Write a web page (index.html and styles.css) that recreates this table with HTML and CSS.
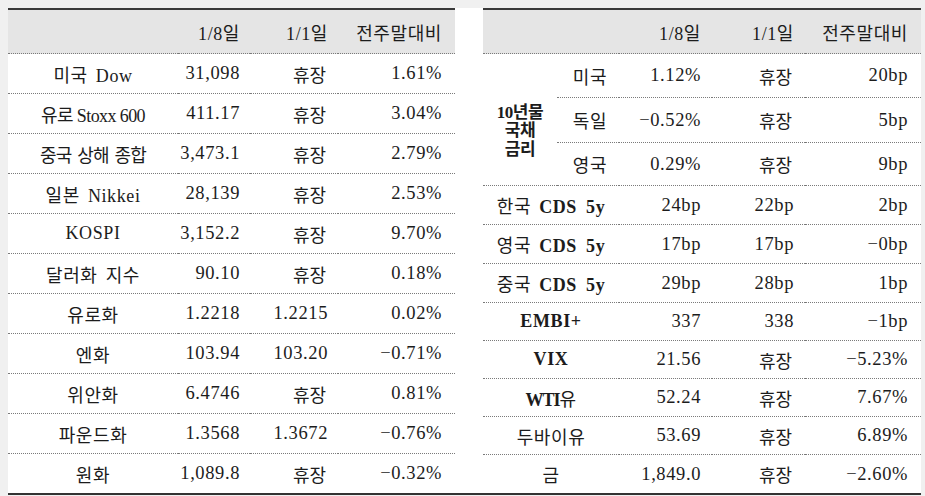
FILE: index.html
```html
<!DOCTYPE html>
<html lang="ko">
<head>
<meta charset="utf-8">
<title>주요 지표</title>
<link rel="stylesheet" href="styles.css">
</head>
<body>
<div class="sheet">
  <div class="tbl tbl-left">
    <div class="c head"></div>
    <div class="c head num">1/8일</div>
    <div class="c head num">1/1일</div>
    <div class="c head num last">전주말대비</div>

    <div class="c lbl"><span>미국 Dow</span></div><div class="c num">31,098</div><div class="c num hj">휴장</div><div class="c num last">1.61%</div>
    <div class="c lbl"><span class="narrow">유로 Stoxx 600</span></div><div class="c num">411.17</div><div class="c num hj">휴장</div><div class="c num last">3.04%</div>
    <div class="c lbl"><span class="tight">중국 상해 종합</span></div><div class="c num">3,473.1</div><div class="c num hj">휴장</div><div class="c num last">2.79%</div>
    <div class="c lbl"><span>일본 Nikkei</span></div><div class="c num">28,139</div><div class="c num hj">휴장</div><div class="c num last">2.53%</div>
    <div class="c lbl"><span>KOSPI</span></div><div class="c num">3,152.2</div><div class="c num hj">휴장</div><div class="c num last">9.70%</div>
    <div class="c lbl"><span>달러화 지수</span></div><div class="c num">90.10</div><div class="c num hj">휴장</div><div class="c num last">0.18%</div>
    <div class="c lbl"><span>유로화</span></div><div class="c num">1.2218</div><div class="c num">1.2215</div><div class="c num last">0.02%</div>
    <div class="c lbl"><span>엔화</span></div><div class="c num">103.94</div><div class="c num">103.20</div><div class="c num last">−0.71%</div>
    <div class="c lbl"><span>위안화</span></div><div class="c num">6.4746</div><div class="c num hj">휴장</div><div class="c num last">0.81%</div>
    <div class="c lbl"><span>파운드화</span></div><div class="c num">1.3568</div><div class="c num">1.3672</div><div class="c num last">−0.76%</div>
    <div class="c lbl end"><span>원화</span></div><div class="c num end">1,089.8</div><div class="c num hj end">휴장</div><div class="c num last end">−0.32%</div>
  </div>

  <div class="tbl tbl-right">
    <div class="c head span2"></div>
    <div class="c head num">1/8일</div>
    <div class="c head num">1/1일</div>
    <div class="c head num last">전주말대비</div>

    <div class="c group"><b>10년물<br>국채<br>금리</b></div>
    <div class="c sub">미국</div><div class="c num">1.12%</div><div class="c num hj">휴장</div><div class="c num last">20bp</div>
    <div class="c sub">독일</div><div class="c num">−0.52%</div><div class="c num hj">휴장</div><div class="c num last">5bp</div>
    <div class="c sub">영국</div><div class="c num">0.29%</div><div class="c num hj">휴장</div><div class="c num last">9bp</div>

    <div class="c lbl span2"><span>한국 <b>CDS 5y</b></span></div><div class="c num">24bp</div><div class="c num">22bp</div><div class="c num last">2bp</div>
    <div class="c lbl span2"><span>영국 <b>CDS 5y</b></span></div><div class="c num">17bp</div><div class="c num">17bp</div><div class="c num last">−0bp</div>
    <div class="c lbl span2"><span>중국 <b>CDS 5y</b></span></div><div class="c num">29bp</div><div class="c num">28bp</div><div class="c num last">1bp</div>
    <div class="c lbl span2"><span><b>EMBI+</b></span></div><div class="c num">337</div><div class="c num">338</div><div class="c num last">−1bp</div>
    <div class="c lbl span2"><span><b>VIX</b></span></div><div class="c num">21.56</div><div class="c num hj">휴장</div><div class="c num last">−5.23%</div>
    <div class="c lbl span2"><span><b class="cond">WTI</b>유</span></div><div class="c num">52.24</div><div class="c num hj">휴장</div><div class="c num last">7.67%</div>
    <div class="c lbl span2"><span>두바이유</span></div><div class="c num">53.69</div><div class="c num hj">휴장</div><div class="c num last">6.89%</div>
    <div class="c lbl span2 end"><span>금</span></div><div class="c num end">1,849.0</div><div class="c num hj end">휴장</div><div class="c num last end">−2.60%</div>
  </div>
</div>
</body>
</html>
```
FILE: styles.css
```css
html, body {
  margin: 0;
  padding: 0;
  background: #f0f0f0;
}

body {
  padding: 8px 0 0 8px;
  font-family: "Liberation Serif", "Noto Sans CJK KR", serif;
  font-size: 18px;
  color: #1c1c1c;
}

.sheet {
  width: 913px;
  display: flex;
  gap: 28px;
  background: #ffffff;
  border-bottom: 2px solid #333333;
}

.tbl {
  display: grid;
}

.tbl-left {
  width: 447px;
  grid-template-columns: 170px 72px 88px 117px;
  grid-template-rows: 46px repeat(10, 40px) 39px;
}

.tbl-right {
  width: 438px;
  grid-template-columns: 74px 62px 93px 93px 116px;
  grid-template-rows: 46px 44px 45px 43px 39px 39px 39px 38px 38px 38px 38px 38px;
}

.c {
  display: flex;
  align-items: center;
  border-bottom: 1px dotted #7a7a7a;
  white-space: nowrap;
  letter-spacing: 0.6px;
}

.c.end {
  border-bottom: none;
}

.head {
  background: #e5e5e5;
  border-top: 2px solid #3a3a3a;
}

.num {
  justify-content: flex-end;
  padding-right: 10px;
  font-size: 18.5px;
}

.head.num {
  font-size: 18px;
}

.num.last {
  padding-right: 13px;
}

.num.hj {
  padding-right: 12px;
  letter-spacing: 0;
  font-size: 18px;
}

.tbl-right .num {
  padding-right: 11px;
}

.tbl-right .num.hj {
  padding-right: 13px;
}

.tbl-right .num.last {
  padding-right: 13px;
}

.lbl {
  justify-content: center;
}

.lbl span {
  word-spacing: 3px;
}

.lbl b {
  word-spacing: 4px;
}

.span2 {
  grid-column: span 2;
}

.lbl span.narrow {
  letter-spacing: -0.6px;
  word-spacing: 0;
}

.lbl span.tight {
  letter-spacing: -0.8px;
  word-spacing: 2px;
}

.cond {
  letter-spacing: -1px;
}

.group {
  grid-row: span 3;
  justify-content: center;
  text-align: center;
  font-size: 17px;
  line-height: 18.5px;
  letter-spacing: -0.5px;
  padding-top: 24px;
  box-sizing: border-box;
}

.sub {
  justify-content: center;
  padding-left: 4px;
}

b {
  font-weight: bold;
}
```
